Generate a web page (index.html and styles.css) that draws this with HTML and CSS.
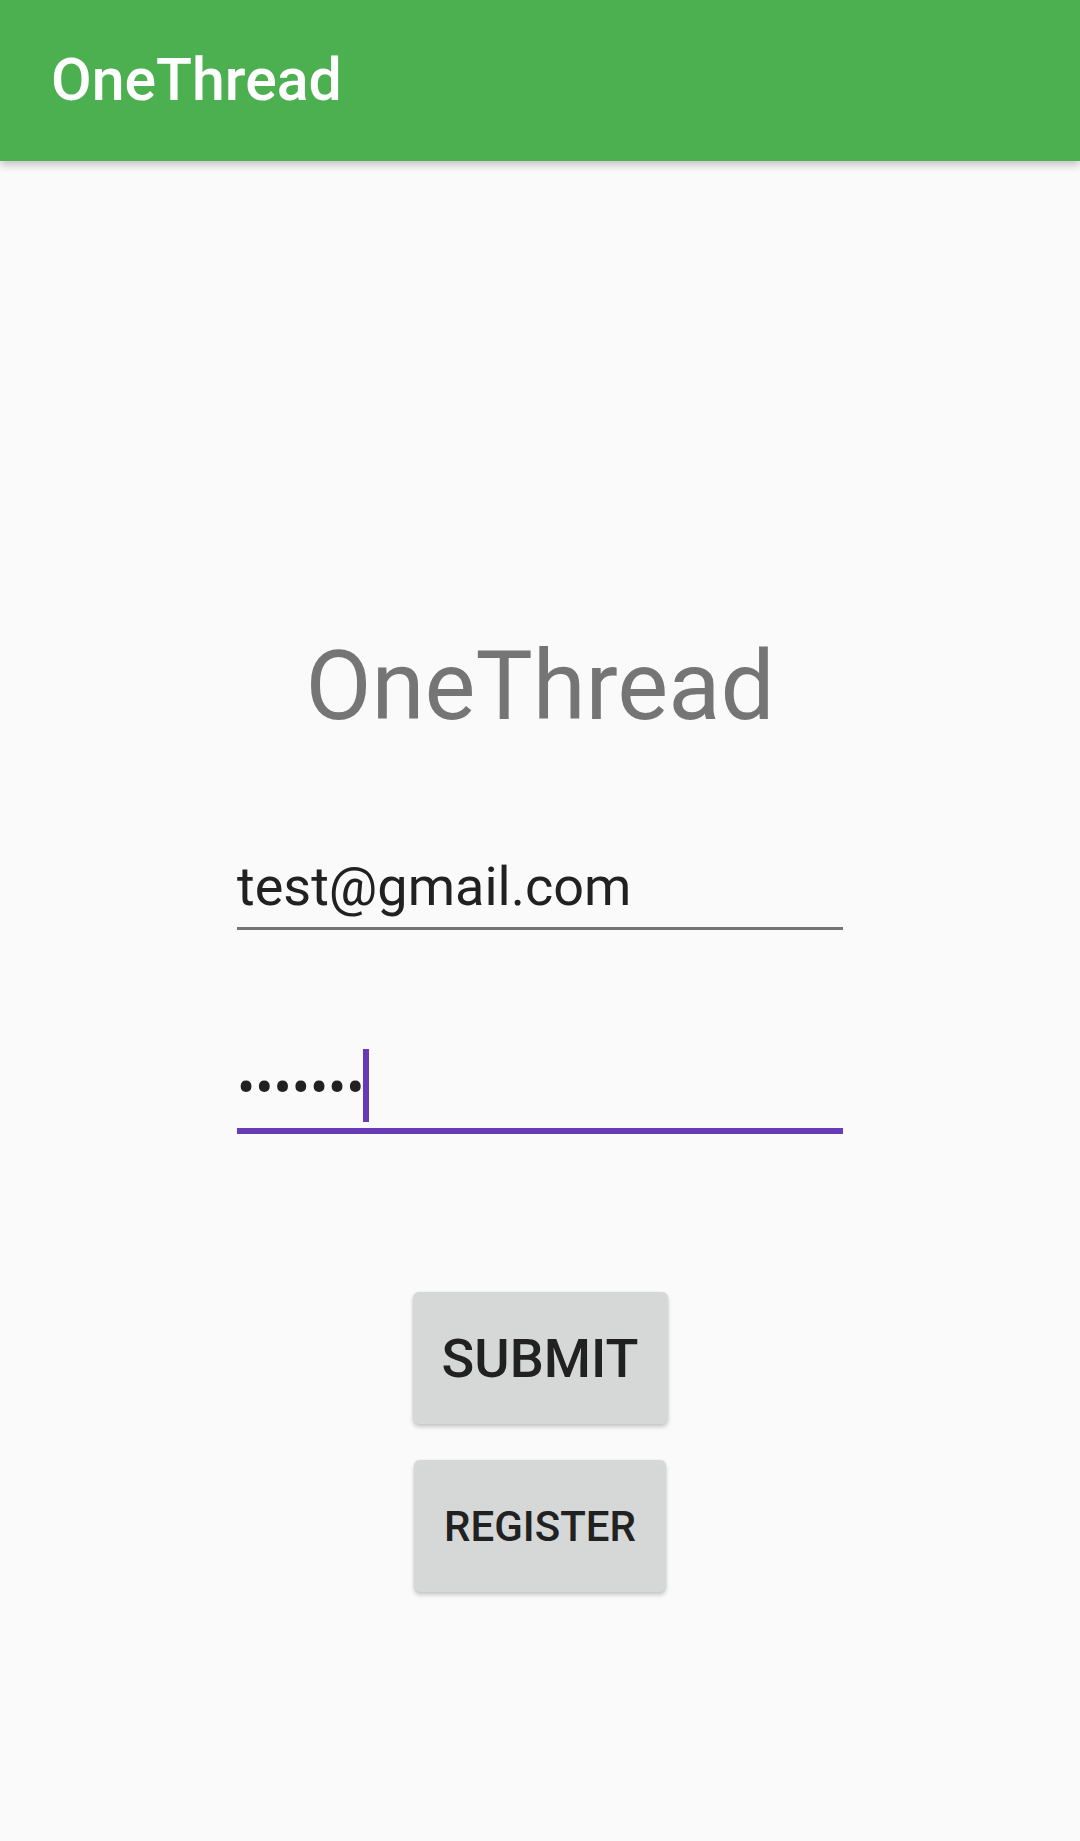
FILE: index.html
```html
<!DOCTYPE html>
<html>
<head>
<meta charset="utf-8">
<link rel="stylesheet" href="styles.css">
</head>
<body>
<header class="appbar"><span class="appbar-title">OneThread</span></header>
<main class="login">
  <h1 class="brand">OneThread</h1>
  <div class="field">test@gmail.com</div>
  <div class="field field-focused">•••••••<span class="cursor"></span></div>
  <button class="btn btn-submit">SUBMIT</button>
  <button class="btn btn-register">REGISTER</button>
</main>
</body>
</html>
```
FILE: styles.css
```css
html, body {
  margin: 0;
  padding: 0;
  background: #fafafa;
  font-family: Roboto, "Noto Sans", sans-serif;
}
body {
  width: 1080px;
  height: 1841px;
  overflow: hidden;
  position: relative;
}
.appbar {
  height: 161px;
  background: #4caf50;
  box-shadow: 0 4px 8px rgba(0, 0, 0, 0.22);
  display: flex;
  align-items: flex-start;
  padding-left: 51px;
  position: relative;
  z-index: 2;
}
.appbar-title {
  color: #fff;
  font-size: 59px;
  font-weight: 500;
  line-height: 160px;
}
.login {
  display: flex;
  flex-direction: column;
  align-items: center;
}
.brand {
  margin: 469px 0 0 0;
  font-size: 96px;
  font-weight: 400;
  line-height: 112px;
  color: #757575;
}
.field {
  width: 606px;
  box-sizing: border-box;
  height: 75px;
  font-size: 54px;
  line-height: 64px;
  color: #212121;
  padding-bottom: 8px;
  border-bottom: 3px solid #757575;
  margin-top: 113px;
  white-space: nowrap;
}
.field-focused {
  margin-top: 126px;
  height: 78px;
  border-bottom: 6px solid #673ab7;
}
.cursor {
  display: inline-block;
  width: 6px;
  height: 73px;
  margin-top: -8px;
  margin-left: -2px;
  vertical-align: -16px;
  background: #673ab7;
}
.btn {
  border: none;
  border-radius: 6px;
  background: #d6d7d7;
  color: #212121;
  font-family: Roboto, "Noto Sans", sans-serif;
  font-weight: 500;
  height: 132px;
  padding: 0;
  display: flex;
  align-items: center;
  justify-content: center;
  box-shadow: 0 3px 4px rgba(0, 0, 0, 0.2), 0 0 2px rgba(0, 0, 0, 0.08);
}
.btn-submit {
  width: 255px;
  margin-top: 158px;
  font-size: 54px;
}
.btn-register {
  width: 252px;
  margin-top: 36px;
  font-size: 42px;
}
```
